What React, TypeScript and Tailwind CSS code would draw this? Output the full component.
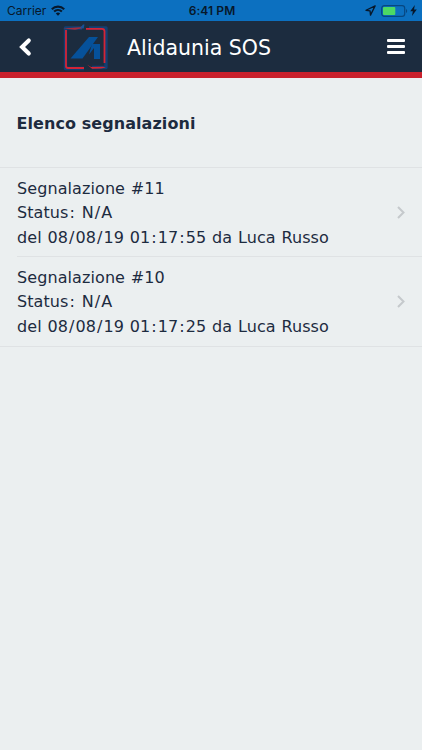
import React from "react";

const reports = [
  { id: 11, status: "N/A", date: "08/08/19 01:17:55", author: "Luca Russo" },
  { id: 10, status: "N/A", date: "08/08/19 01:17:25", author: "Luca Russo" },
];

// Gives slashes and colons a little more room on each side.
function Spaced({ text }: { text: string }) {
  return (
    <>
      {text.split(/([/:])/).map((part, i) =>
        part === "/" || part === ":" ? (
          <span key={i} className="px-[1px]">
            {part}
          </span>
        ) : (
          part
        )
      )}
    </>
  );
}

function StatusBar() {
  return (
    <div className="grid h-[21px] grid-cols-3 items-center bg-[#0c70c0] pr-[5px] pl-[7px] font-['Inter','Liberation_Sans',sans-serif] text-[12px] leading-[21px] text-[#07182b]">
      <div className="flex items-center gap-[5px]">
        <span>Carrier</span>
        <svg width="14" height="11" viewBox="0 0 14 11" fill="none" stroke="currentColor" strokeWidth="2.1">
          <path d="M.8 4.2C4.3.8 9.7.8 13.2 4.2" />
          <path d="M3.1 6.6c2.2-2.1 5.6-2.1 7.8 0" />
          <path d="M7 10.7 4.8 8.5c1.3-1.2 3.1-1.2 4.4 0z" fill="currentColor" stroke="none" />
        </svg>
      </div>
      <div className="text-center font-semibold tracking-[0.1px]">6:41 PM</div>
      <div className="flex items-center justify-end">
        <svg width="11" height="11" viewBox="0 0 10 10" fill="none" stroke="currentColor" strokeWidth="1.2" strokeLinejoin="round">
          <path d="M9.2.8.9 4.8l3.7.5.4 3.9z" />
        </svg>
        <svg className="ml-[5px]" width="27" height="12" viewBox="0 0 27 12">
          <rect x=".7" y=".7" width="23" height="10.6" rx="2.6" fill="none" stroke="#074781" strokeWidth="1.2" />
          <rect x="2" y="2" width="12.3" height="8" rx="1" fill="#4cd964" />
          <path d="M25 4v4c1.6-.7 1.6-3.3 0-4z" fill="#074781" />
        </svg>
        <svg className="ml-[2px]" width="7" height="11" viewBox="0 0 6 10" fill="currentColor">
          <path d="M4.2 0 0 5.6h2.4L1.6 10 6 4.1H3.5z" />
        </svg>
      </div>
    </div>
  );
}

function Logo() {
  return (
    <svg width="48" height="48" viewBox="0 0 48 48" fill="none">
      <path d="M20 4H3.5V44.5H22M27 4H44V43.5H30" stroke="#123f73" strokeWidth="3.4" strokeLinejoin="round" />
      <path d="M4 6V42.3q0 1.7 2 1.7H22M24 4.8H40q2.5 0 2.5 2.5V39" stroke="#d42436" strokeWidth="1.8" />
      <path d="M1 4.4 18 3.2l3-1.5-.7 2.5L13 5.7z" fill="#a32c3d" />
      <path d="m18 4.3 3-3.8h1.5l-.8 4z" fill="#145399" />
      <path d="m25 40.4 4 2.6 12-.2 3 .8-5 1-9 .2z" fill="#d42432" />
      <path d="M8.5 34.5 27 13h9L20.5 34.5z" fill="#06519a" />
      <path d="M30 20h8v15h-6V24l-5 6.5z" fill="#06519a" />
    </svg>
  );
}

function Header() {
  return (
    <header className="flex h-[57px] items-center border-b-[6px] border-[#c9202c] bg-[#1c2c3f] pr-[17px] pl-[18px] text-white">
      <button type="button" aria-label="Indietro">
        <svg width="14" height="20" viewBox="0 0 13 18" fill="none" stroke="currentColor" strokeWidth="3.8" strokeLinecap="round">
          <path d="M10 3 3.8 9l6.2 6" />
        </svg>
      </button>
      <div className="ml-[30px] pt-[2px]">
        <Logo />
      </div>
      <h1 className="ml-[17px] pt-[4px] text-[20.5px] whitespace-nowrap">Alidaunia SOS</h1>
      <button type="button" aria-label="Menu" className="ml-auto flex flex-col gap-[3px]">
        <span className="h-[3px] w-[18px] rounded-[1px] bg-white" />
        <span className="h-[3px] w-[18px] rounded-[1px] bg-white" />
        <span className="h-[3px] w-[18px] rounded-[1px] bg-white" />
      </button>
    </header>
  );
}

export default function App() {
  return (
    <div className="h-[750px] w-[422px] overflow-hidden bg-[#ebeff0] font-['DejaVu_Sans',sans-serif] text-[#1d2b3f]">
      <StatusBar />
      <Header />
      <main>
        <h2 className="h-[89px] pl-[16.5px] text-[16px] leading-[91px] font-bold tracking-[0.07px]">Elenco segnalazioni</h2>
        <ul className="border-y border-[#dfe2e4]">
          {reports.map((report, i) => (
            <li key={report.id} className="flex pl-[17px]">
              <div className={`flex flex-1 items-center justify-between pr-[17px] ${i > 0 ? "border-t border-[#dfe2e4]" : ""}`}>
                <div className="pt-[8.6px] pb-[6.3px] text-[16px] leading-[24.5px] tracking-[0.09px] whitespace-nowrap [word-spacing:0.55px]">
                  <p>Segnalazione #{report.id}</p>
                  <p>
                    <Spaced text={`Status: ${report.status}`} />
                  </p>
                  <p>
                    <Spaced text={`del ${report.date} da ${report.author}`} />
                  </p>
                </div>
                <svg width="8" height="13" viewBox="0 0 8 13" fill="none" stroke="#c5c9cc" strokeWidth="2">
                  <path d="m1 1 5.5 5.5L1 12" />
                </svg>
              </div>
            </li>
          ))}
        </ul>
      </main>
    </div>
  );
}
